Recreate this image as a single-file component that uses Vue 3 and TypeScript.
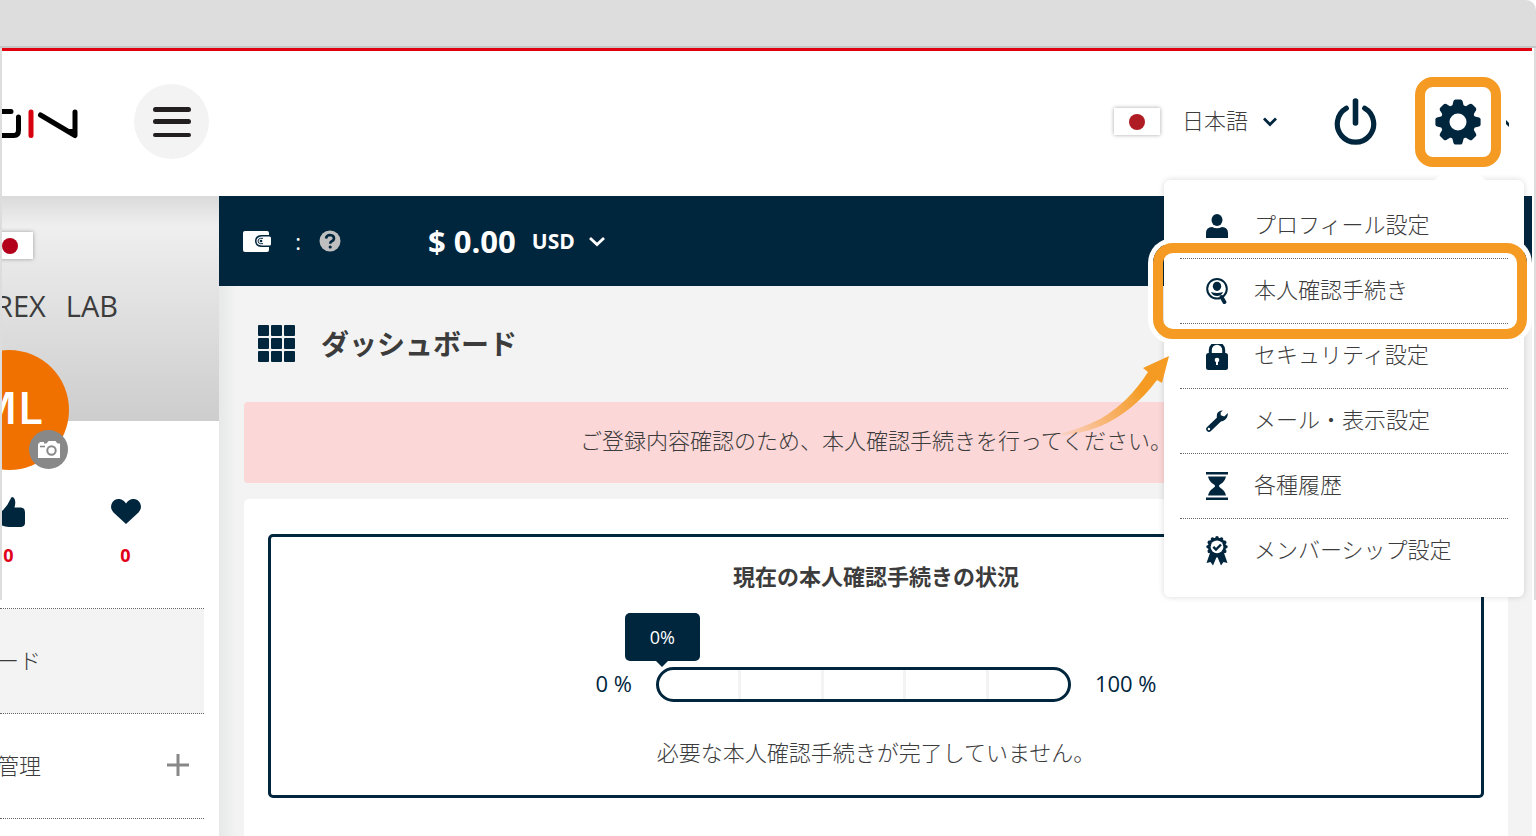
<script setup lang="ts">
import { ref } from 'vue'

interface MenuItem {
  id: string
  label: string
  highlighted?: boolean
}

const menuItems: MenuItem[] = [
  { id: 'profile', label: 'プロフィール設定' },
  { id: 'verify', label: '本人確認手続き', highlighted: true },
  { id: 'security', label: 'セキュリティ設定' },
  { id: 'mail', label: 'メール・表示設定' },
  { id: 'history', label: '各種履歴' },
  { id: 'membership', label: 'メンバーシップ設定' },
]

const gearTeeth = [0, 45, 90, 135, 180, 225, 270, 315]
const gridCells = [0, 13, 26]
const sealBumps = [0, 30, 60, 90, 120, 150, 180, 210, 240, 270, 300, 330]
const language = ref('ja')
const currency = ref('usd')
const progress = ref(0)
</script>

<template>
  <div class="page">
    <div class="chrome"></div>
    <div class="frame"></div>

    <header class="header">
      <svg class="logo" width="80" height="40" viewBox="0 0 80 40" fill="none" stroke-linecap="round" stroke-linejoin="round" stroke-width="5">
        <path d="M0 9.500H9M16.500 15V28Q16.500 33.500 12 33.500H0" stroke="#000" />
        <path d="M29 10V33.500" stroke="#d7000f" />
        <path d="M38.500 13L73 33.500V10" stroke="#000" />
        <path d="M64 27L72 27V33Z" fill="#000" />
      </svg>
      <button class="burger" type="button" aria-label="menu">
        <svg width="38" height="32" viewBox="0 0 38 32" stroke="#231f20" stroke-linecap="round">
          <path d="M2.500 3.500H35.500M2.500 15.500H35.500" stroke-width="5" />
          <path d="M2 29H36" stroke-width="4" />
        </svg>
      </button>
      <span class="spacer"></span>
      <span class="flag"><i></i></span>
      <label class="picker lang">
        <select v-model="language" aria-label="language">
          <option value="ja">日本語</option>
        </select>
        <svg width="14" height="10" viewBox="0 0 14 10" fill="none" stroke="#00263e" stroke-width="2.800"><path d="M1 1.500L7 7.500L13 1.500" /></svg>
      </label>
      <button class="plain power" type="button" aria-label="logout">
        <svg width="43" height="48" viewBox="0 0 43 48" fill="none" stroke="#00263e" stroke-linecap="round" stroke-width="5.200">
          <path d="M21.500 3V25" stroke-width="5.600" />
          <path d="M12.300 10.300A18.200 18.200 0 1 0 30.700 10.300" />
        </svg>
      </button>
      <div class="settings">
        <button class="gear" type="button" aria-label="settings">
          <svg width="46" height="46" viewBox="-23 -23 46 46" fill="#00263e">
            <circle r="13" fill="none" stroke="#00263e" stroke-width="9" />
            <path v-for="a in gearTeeth" :key="a" :transform="`rotate(${a})`" d="M-6 -15L-4.500 -21Q-4 -22.600 -2.500 -22.600H2.500Q4 -22.600 4.500 -21L6 -15Z" />
          </svg>
        </button>
        <nav class="dropdown">
          <svg class="notch" width="56" height="9" viewBox="0 0 56 9"><path d="M0 9Q4 7 8 3Q11 0 15 0H41Q45 0 48 3Q52 7 56 9Z" fill="#fff" /></svg>
          <a v-for="item in menuItems" :key="item.id" class="item" href="#">
            <svg v-if="item.id === 'profile'" width="22" height="26" viewBox="0 0 22 26" fill="#00263e">
              <ellipse cx="11" cy="7" rx="5.500" ry="6" />
              <path d="M0 26V20Q0 14.500 6 14Q11 16.500 16 14Q22 14.500 22 20V26Z" />
            </svg>
            <svg v-else-if="item.id === 'verify'" width="22" height="26" viewBox="0 0 22 26" fill="#00263e">
              <circle cx="11" cy="10.800" r="9.800" fill="none" stroke="#00263e" stroke-width="2" />
              <ellipse cx="11" cy="8.300" rx="4.200" ry="4.600" />
              <path d="M5 14Q11 16 17 14Q15.500 18 11 18Q6.500 18 5 14Z" />
              <path d="M15.500 19L18.500 24.200" stroke="#00263e" stroke-width="3.800" stroke-linecap="round" />
            </svg>
            <svg v-else-if="item.id === 'security'" width="22" height="28" viewBox="0 0 22 28">
              <path d="M4.300 14V8A6.700 6.700 0 0 1 17.700 8V14" fill="none" stroke="#00263e" stroke-width="3" />
              <rect y="11" width="22" height="17" rx="2.500" fill="#00263e" />
              <circle cx="11" cy="18" r="2.300" fill="#fff" /><path d="M11 18V23" stroke="#fff" stroke-width="2" />
            </svg>
            <svg v-else-if="item.id === 'mail'" width="22" height="24" viewBox="0 0 22 24">
              <path d="M3 20L13.500 10" stroke="#00263e" stroke-width="5.600" stroke-linecap="round" />
              <path d="M16.800 1.500Q12.500 1.300 11 5Q10.300 7.800 11.500 10.300Q13.500 13 17 12Q21.600 10.300 22 4L18.200 7.400L14.800 6.200L14.600 3.600Z" fill="#00263e" />
              <circle cx="2.900" cy="20" r="1.200" fill="#fff" />
            </svg>
            <svg v-else-if="item.id === 'history'" width="22" height="28" viewBox="0 0 22 28" fill="#00263e">
              <path d="M0 0H22V2.500H0ZM0 25.500H22V28H0Z" />
              <path d="M2 4.500H20Q19 9.500 14 12.500Q12 14 14 15.500Q19 18.500 20 23.500H2Q3 18.500 8 15.500Q10 14 8 12.500Q3 9.500 2 4.500Z" />
            </svg>
            <svg v-else width="22" height="30" viewBox="0 0 22 30" fill="#00263e">
              <path d="M4 17L0.500 27L4.500 26L7 29.500L11 20L15 29.500L17.500 26L21.500 27L18 17Z" />
              <circle cx="11" cy="10.800" r="9.200" />
              <circle v-for="a in sealBumps" :key="a" :transform="`rotate(${a} 11 10.800)`" cx="11" cy="1.900" r="1.800" />
              <circle cx="11" cy="10.800" r="6.400" fill="#fff" />
              <path d="M7.300 10.800L10 13.500L15 8.500" fill="none" stroke="#00263e" stroke-width="2.400" />
            </svg>
            <span>{{ item.label }}</span>
            <i v-if="item.highlighted" class="callout"></i>
          </a>
          <svg class="arrow" width="122" height="84" viewBox="1050 354 122 84">
            <defs>
              <linearGradient id="fade" gradientUnits="userSpaceOnUse" x1="1050" y1="436" x2="1142" y2="392">
                <stop offset="0" stop-color="#f59b23" stop-opacity="0" />
                <stop offset="1" stop-color="#f59b23" />
              </linearGradient>
            </defs>
            <path d="M1050 436Q1079 430 1101 418.500Q1129 402 1148 372L1143 368L1169 356L1162 383L1157 380Q1134 411 1101 426Q1080 435 1050 436Z" fill="url(#fade)" />
          </svg>
        </nav>
      </div>
      <svg class="sliver" width="3" height="8" viewBox="0 0 3 8"><path d="M0 0L3 3V7L0 4Z" fill="#00263e" /></svg>
    </header>

    <div class="body">
      <aside class="sidebar">
        <section class="profile">
          <span class="flag"><i></i></span>
          <p class="name"><span>REX</span><span>LAB</span></p>
        </section>
        <div class="avatar">
          <span>ML</span>
          <button class="camera" type="button" aria-label="photo">
            <svg width="22" height="17" viewBox="0 0 22 17">
              <path d="M0 2.500H1.500V1H6V2.500H8.500L10.500 0H17.500L19.500 2.500H22V17H0Z" fill="#fff" />
              <circle cx="13.500" cy="9.500" r="4.200" fill="none" stroke="#888" stroke-width="2" />
              <path d="M2 5.500H7" stroke="#888" stroke-width="1.600" />
            </svg>
          </button>
        </div>
        <ul class="stats">
          <li>
            <svg width="32" height="32" viewBox="0 0 32 32" fill="#00263e">
              <path d="M1 15H7V30H1ZM9 15Q14 11 17.500 3Q18.500 0 20.500 1.500Q23.500 4 21.500 11.500H28Q32 12 32 16V27Q32 30.500 28 31H16Q12 30.500 9 29.500Z" />
            </svg>
            <b>0</b>
          </li>
          <li>
            <svg width="30" height="32" viewBox="0 0 30 32" fill="#00263e">
              <path d="M15 28L2.500 16.500Q-1.500 12 1 7Q3.500 2.500 8.500 3Q12.500 3.500 15 7.500Q17.500 3.500 21.500 3Q26.500 2.500 29 7Q31.500 12 27.500 16.500Z" />
            </svg>
            <b>0</b>
          </li>
        </ul>
        <nav class="side-nav">
          <a class="active" href="#"><span>ード</span></a>
          <a href="#">
            <span>管理</span>
            <svg width="22" height="22" viewBox="0 0 22 22" stroke="#888" stroke-width="3"><path d="M11 0V22M0 11H22" /></svg>
          </a>
        </nav>
      </aside>

      <main class="main">
        <div class="balance">
          <svg width="28" height="21" viewBox="0 0 28 21">
            <path d="M2 0H24Q26 0 26 2V19Q26 21 24 21H2Q0 21 0 19V2Q0 0 2 0Z" fill="#fff" />
            <path d="M28 4H18Q12 4.500 12 10Q12 15.500 18 16H28Z" fill="#00263e" />
            <path d="M26.500 5.500H18.500Q13.500 6 13.500 10Q13.500 14 18.500 14.500H26.500Q28 14.500 28 13V7Q28 5.500 26.500 5.500Z" fill="#fff" />
            <path d="M20 7.300H17.500Q15 7.800 15 10Q15 12.500 17.500 12.700H20" fill="none" stroke="#00263e" stroke-width="1" />
            <circle cx="18" cy="10" r="1.300" fill="#00263e" />
          </svg>
          <span class="colon">:</span>
          <svg class="help" width="22" height="22" viewBox="0 0 22 22">
            <circle cx="11" cy="11" r="10.500" fill="#bfbfbf" />
            <path d="M7 8.500Q7.500 5 11 5Q15 5.200 15 8.300Q15 10.300 12.800 11.200Q11.200 12 11.200 13.800" fill="none" stroke="#00263e" stroke-width="2.600" />
            <circle cx="11.200" cy="17" r="1.600" fill="#00263e" />
          </svg>
          <strong>$ 0.00</strong>
          <label class="picker currency">
            <select v-model="currency" aria-label="currency">
              <option value="usd">USD</option>
            </select>
            <svg width="16" height="11" viewBox="0 0 16 11" fill="none" stroke="#fff" stroke-width="2.800"><path d="M1 2L8 8.500L15 2" /></svg>
          </label>
        </div>

        <div class="content">
          <div class="title">
            <svg width="38" height="38" viewBox="0 0 38 38" fill="#00263e">
              <template v-for="y in gridCells" :key="y">
                <rect v-for="x in gridCells" :key="x" :x="x" :y="y" width="11" height="11" rx="1" />
              </template>
            </svg>
            <h1>ダッシュボード</h1>
          </div>
          <p class="alert">ご登録内容確認のため、本人確認手続きを行ってください。</p>
          <section class="panel">
            <div class="status">
              <h2>現在の本人確認手続きの状況</h2>
              <div class="meter">
                <span>0 %</span>
                <div class="bar" role="progressbar" :aria-valuenow="progress" aria-valuemin="0" aria-valuemax="100">
                  <i v-for="n in 5" :key="n"></i>
                  <span class="bubble" :style="{ left: progress + '%' }">{{ progress }}%</span>
                </div>
                <span>100 %</span>
              </div>
              <p>必要な本人確認手続きが完了していません。</p>
            </div>
          </section>
        </div>
      </main>
    </div>
  </div>
</template>

<style>
body {
  margin: 0;
  background: #fff;
}
</style>

<style scoped>
* {
  box-sizing: border-box;
}
svg {
  display: block;
  flex: none;
}
h1, h2, p, ul {
  margin: 0;
  padding: 0;
}
a {
  color: inherit;
  text-decoration: none;
}
button {
  padding: 0;
  cursor: pointer;
}
.page {
  position: relative;
  display: flex;
  flex-direction: column;
  min-height: 100vh;
  overflow: hidden;
  font-family: "Open Sans", "Noto Sans CJK JP", sans-serif;
  font-size: 22px;
  font-weight: 300;
  line-height: 32px;
  color: #3c3c3c;
}
.chrome {
  height: 48px;
  background: #ddd;
  border-bottom: 2px solid #c5c5c5;
  border-radius: 0 10px 0 0;
}
.frame {
  position: absolute;
  top: 48px;
  left: 0;
  right: 0;
  height: 552px;
  border: solid #ddd;
  border-width: 0 2px;
  pointer-events: none;
  z-index: 5;
}
.header {
  position: relative;
  z-index: 4;
  display: flex;
  align-items: center;
  height: 148px;
  margin-right: 4px;
  padding: 0 23px 4px 2px;
  border-top: 3px solid #e1000f;
  background: #fff;
}
.burger {
  display: flex;
  align-items: center;
  justify-content: center;
  width: 75px;
  height: 75px;
  margin-left: 52px;
  border: 0;
  border-radius: 50%;
  background: #f3f3f3;
}
.spacer {
  flex: 1;
}
.flag {
  display: flex;
  align-items: center;
  justify-content: center;
  width: 46px;
  height: 27px;
  background: #fff;
  box-shadow: 0 0 4px rgba(0, 0, 0, 0.35);
}
.flag i {
  width: 16px;
  height: 16px;
  border-radius: 50%;
  background: #b01c24;
}
.picker {
  display: flex;
  align-items: center;
}
.picker select {
  appearance: none;
  padding: 0;
  border: 0;
  background: transparent;
  color: inherit;
  font: inherit;
}
.lang {
  gap: 14px;
  margin: 0 57px 0 22px;
}
.lang select {
  padding-bottom: 4px;
}
.plain {
  border: 0;
  background: none;
}
.settings {
  position: relative;
  margin: 0 5px 0 38px;
}
.gear {
  display: flex;
  align-items: center;
  justify-content: center;
  width: 86px;
  height: 90px;
  border: 10px solid #f59b23;
  border-radius: 18px;
  background: #fff;
}
.dropdown {
  position: absolute;
  top: 103px;
  right: -23px;
  width: 360px;
  padding: 14px 16px 13px;
  border-radius: 6px;
  background: #fff;
  box-shadow: 0 0 6px rgba(0, 0, 0, 0.15);
}
.notch {
  position: absolute;
  top: -8px;
  right: 36px;
}
.item {
  position: relative;
  display: flex;
  align-items: center;
  gap: 26px;
  height: 65px;
  padding-left: 26px;
  border-bottom: 1px dotted #666;
}
.item span {
  padding-bottom: 4px;
}
.item:last-of-type {
  border-bottom: 0;
}
.item:nth-of-type(2) {
  z-index: 1;
}
.callout {
  position: absolute;
  inset: -16px -19px -16px -27px;
  border: 10px solid #f59b23;
  border-radius: 20px;
  box-shadow: 0 0 0 5px #fff;
}
.arrow {
  position: absolute;
  top: 174px;
  left: -114px;
  z-index: 2;
}
.sliver {
  margin-top: 4px;
}
.body {
  display: flex;
  flex: 1;
  margin-right: 4px;
}
.sidebar {
  flex: none;
  width: 219px;
  overflow: hidden;
  background: #fff;
}
.profile {
  height: 225px;
  padding-top: 36px;
  background: linear-gradient(#dadada, #efefef 30px, #e6e6e6 80px, #cdcdcd);
}
.profile .flag {
  margin-left: -13px;
}
.profile .flag i {
  background: #b3001b;
}
.name {
  display: flex;
  justify-content: flex-end;
  gap: 20px;
  width: 118px;
  margin-top: 27px;
  font-size: 29px;
  font-weight: 400;
  line-height: 40px;
}
.avatar {
  position: relative;
  display: flex;
  align-items: center;
  justify-content: center;
  width: 120px;
  height: 120px;
  margin: -71px 0 0 -51px;
  border-radius: 50%;
  background: #f07000;
  color: #fff;
  font-size: 46px;
  font-weight: 600;
  line-height: 60px;
}
.avatar span {
  padding-bottom: 8px;
}
.camera {
  position: absolute;
  right: 1px;
  bottom: 1px;
  display: flex;
  align-items: center;
  justify-content: center;
  width: 39px;
  height: 39px;
  border: 0;
  border-radius: 50%;
  background: #888;
}
.stats {
  display: flex;
  margin: 26px 0 0 -50px;
  list-style: none;
}
.stats li {
  display: flex;
  flex-direction: column;
  align-items: center;
  gap: 11px;
  width: 117px;
  height: 112px;
}
.stats b {
  color: #e1001a;
  font-size: 18px;
  font-weight: 700;
}
.side-nav {
  margin-right: 15px;
  border-top: 1px dotted #666;
}
.side-nav a {
  display: flex;
  align-items: center;
  justify-content: space-between;
  height: 105px;
  padding: 0 15px 3px 0;
  border-bottom: 1px dotted #666;
}
.side-nav span {
  margin-left: -3px;
}
.active {
  background: #f3f3f3;
}
.main {
  display: flex;
  flex: 1;
  flex-direction: column;
  min-width: 0;
  background: linear-gradient(90deg, #e6e9e8, #f3f3f3 18px);
}
.balance {
  display: flex;
  align-items: center;
  height: 90px;
  padding-left: 24px;
  background: #00263e;
  color: #fff;
}
.colon {
  width: 8px;
  margin: 0 18px 0 22px;
  font-weight: 400;
  text-align: right;
}
.balance strong {
  margin: 0 16px 0 87px;
  font-size: 31px;
  font-weight: 700;
}
.currency {
  gap: 14px;
  font-size: 21px;
  font-weight: 700;
}
.content {
  display: flex;
  flex: 1;
  flex-direction: column;
  padding: 0 24px 0 25px;
}
.title {
  display: flex;
  align-items: center;
  gap: 25px;
  height: 116px;
  padding-left: 14px;
}
.title h1 {
  font-size: 28px;
  font-weight: 700;
  line-height: 40px;
}
.alert {
  padding: 22px 0 27px;
  border-radius: 4px;
  background: #fcd7d7;
  text-align: center;
}
.panel {
  flex: 1;
  margin-top: 16px;
  padding: 35px 24px 38px;
  border-radius: 5px 5px 0 0;
  background: #fff;
}
.status {
  padding: 23px 0 27px;
  border: 3px solid #00263e;
  border-radius: 5px;
  text-align: center;
}
.status h2 {
  font-size: 22px;
  font-weight: 700;
  line-height: 32px;
}
.meter {
  display: flex;
  align-items: center;
  justify-content: center;
  gap: 24px;
  margin: 75px 0 34px;
  color: #00263e;
  font-weight: 400;
}
.meter > span {
  padding-bottom: 3px;
}
.bar {
  position: relative;
  display: flex;
  width: 415px;
  height: 35px;
  border: 3px solid #00263e;
  border-radius: 18px;
}
.bar i {
  flex: 1;
  border-right: 3px solid #f3f3f3;
}
.bar i:nth-of-type(5) {
  border-right: 0;
}
.bubble {
  position: absolute;
  bottom: 38px;
  width: 75px;
  margin-left: -34px;
  border-radius: 5px;
  background: #00263e;
  color: #fff;
  font-size: 18px;
  line-height: 48px;
}
.bubble::after {
  content: "";
  position: absolute;
  top: 100%;
  left: 50%;
  margin-left: -6px;
  border: 6px solid transparent;
  border-top-color: #00263e;
  border-bottom: 0;
}
</style>
